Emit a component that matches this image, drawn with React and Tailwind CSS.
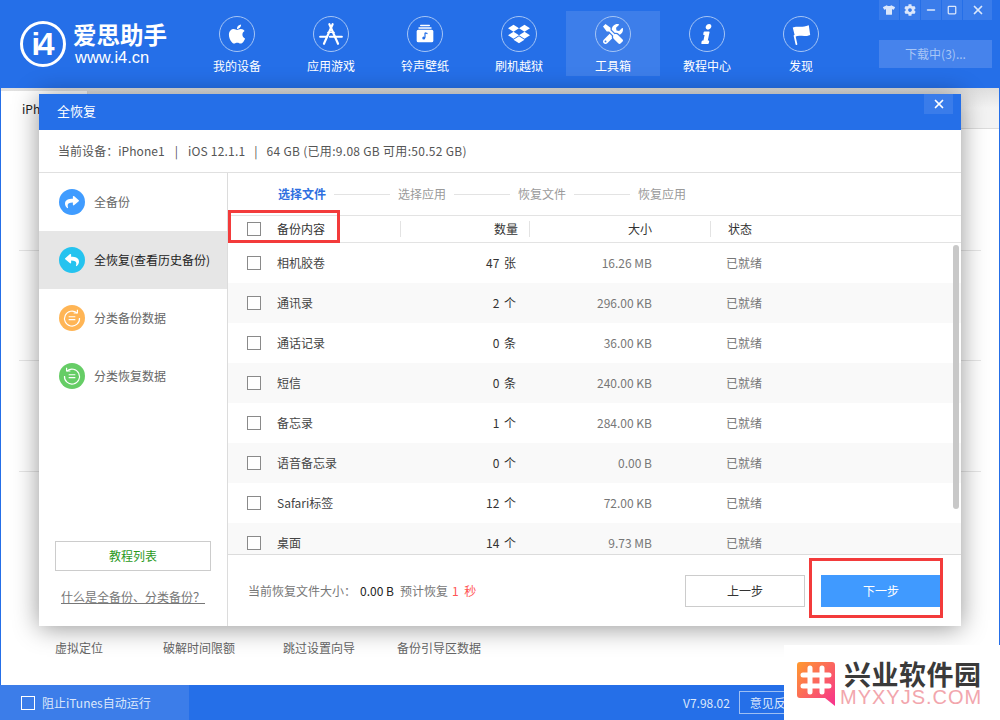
import { FaApple, FaDropbox, FaTshirt, FaCog, FaTools, FaInfo, FaShare, FaReply } from 'react-icons/fa'
import { X, Minus, Square } from 'lucide-react'

const font = { fontFamily: '"Noto Sans CJK SC", sans-serif' }

const navItems = [
  { label: '我的设备', icon: <FaApple className="w-[22px] h-[22px]" /> },
  { label: '应用游戏', icon: <AppStoreIcon /> },
  { label: '铃声壁纸', icon: <RingIcon /> },
  { label: '刷机越狱', icon: <FaDropbox className="w-[22px] h-[22px]" /> },
  { label: '工具箱', icon: <FaTools className="w-5 h-5" />, active: true },
  { label: '教程中心', icon: <FaInfo className="w-5 h-5 -skew-x-12" /> },
  { label: '发现', icon: <FlagIcon /> },
]

const rows = [
  ['相机胶卷', '47 张', '16.26 MB'],
  ['通讯录', '2 个', '296.00 KB'],
  ['通话记录', '0 条', '36.00 KB'],
  ['短信', '0 条', '240.00 KB'],
  ['备忘录', '1 个', '284.00 KB'],
  ['语音备忘录', '0 个', '0.00 B'],
  ['Safari标签', '12 个', '72.00 KB'],
  ['桌面', '14 个', '9.73 MB'],
]

const tools = [
  { label: '虚拟定位', color: 'bg-[#12a55a]' },
  { label: '破解时间限额', color: 'bg-[#3e6fc9]' },
  { label: '跳过设置向导', color: 'bg-[#2a86d8]' },
  { label: '备份引导区数据', color: 'bg-[#3565c8]' },
]

const menu = [
  { label: '全备份', color: 'bg-[#409cff]', icon: <FaShare className="w-[14px] h-[14px] text-white" /> },
  { label: '全恢复(查看历史备份)', color: 'bg-[#25c3ef]', icon: <FaReply className="w-[14px] h-[14px] text-white" />, active: true },
  { label: '分类备份数据', color: 'bg-[#ffb555]', icon: <CycleIcon /> },
  { label: '分类恢复数据', color: 'bg-[#66cd66]', icon: <CycleIcon flip /> },
]

function AppStoreIcon() {
  return (
    <svg viewBox="0 0 24 24" className="w-[26px] h-[26px]" fill="none" stroke="white" strokeLinecap="round">
      <path d="M10.5 3 L18.5 21" strokeWidth="2" />
      <path d="M13.5 3 L5.5 21" strokeWidth="2" />
      <path d="M2 14.5 H8 M11 14.5 H22" strokeWidth="2" />
      <path d="M9 10.5 H15" strokeWidth="1" />
    </svg>
  )
}

function RingIcon() {
  return (
    <svg viewBox="0 0 24 24" className="w-[20px] h-[20px]">
      <rect x="6" y="1" width="12" height="1.6" rx="0.8" fill="white" />
      <rect x="4" y="4" width="16" height="1.6" rx="0.8" fill="white" />
      <rect x="2" y="7" width="20" height="15" rx="2" fill="white" />
      <path d="M12 10.5 V16.5 M12 10.5 L15 11.5" stroke="#256fe8" strokeWidth="1.4" fill="none" />
      <circle cx="10.5" cy="16.8" r="1.8" fill="#256fe8" />
    </svg>
  )
}

function FlagIcon() {
  return (
    <svg viewBox="0 0 24 24" className="w-[22px] h-[22px]" fill="white">
      <path d="M3 5 C8 2.5 11 6 20.5 2.5 L22 13 C15 16 11 12.5 5.5 15 Z" />
      <path d="M5 14 L7 23" stroke="white" strokeWidth="2" strokeLinecap="round" />
    </svg>
  )
}

function CycleIcon({ flip }) {
  return (
    <svg viewBox="0 0 24 24" className={flip ? 'w-5 h-5 -scale-x-100' : 'w-5 h-5'} fill="none" stroke="white" strokeWidth="1.4">
      <path d="M18 6 A9 9 0 1 0 21 12" />
      <path d="M14 6 H18.5 V2" />
      <path d="M8 10.5 H16 M8 14 H16" />
    </svg>
  )
}

function Checkbox() {
  return <span className="block w-[14px] h-[14px] border border-[#8a8a8a] bg-white shrink-0" />
}

function Step({ label, active, line }) {
  return (
    <>
      <span className={active ? 'text-[#2f6fe0] font-bold' : 'text-[#9a9a9a]'}>{label}</span>
      {line && <span className="w-[56px] h-px bg-[#e3e3e3] mx-[8px]" />}
    </>
  )
}

export default function App() {
  return (
    <div style={font} className="relative w-[1000px] h-[720px] overflow-hidden flex flex-col bg-white text-xs">
      <header className="h-[88px] bg-[#256fe8] flex shrink-0 relative">
        <div className="w-[190px] pl-[20px] pt-[21px] flex gap-[7px] text-white">
          <div className="w-[46px] h-[46px] rounded-full border-[3px] border-white flex items-center justify-center font-bold text-[31px] tracking-[-3px] leading-none pr-[3px]" style={{ fontFamily: '"Liberation Sans", sans-serif' }}>
            i4
          </div>
          <div>
            <div className="text-[23.5px] leading-[27px] font-bold whitespace-nowrap">爱思助手</div>
            <div className="text-[16.5px] leading-[19px] ml-[2px]" style={{ fontFamily: '"Liberation Sans", sans-serif' }}>www.i4.cn</div>
          </div>
        </div>
        <nav className="flex pt-[11px] h-[76px]">
          {navItems.map((item) => (
            <div key={item.label} className={`w-[94px] h-[65px] flex flex-col items-center pt-[5px] text-white ${item.active ? 'bg-[#3d7eea]' : ''}`}>
              <div className="w-[36px] h-[36px] rounded-full border border-[#a5c5f5] flex items-center justify-center">{item.icon}</div>
              <div className="mt-[5px] leading-[17px] whitespace-nowrap">{item.label}</div>
            </div>
          ))}
        </nav>
        <div className="absolute left-[879px] top-0 w-[113px] flex flex-col">
          <div className="flex gap-px h-[20px] text-[#dbe7fb]">
            <span className="w-[20px] bg-[#3a7cea] flex items-center justify-center"><FaTshirt className="w-3 h-3" /></span>
            <span className="w-[20px] bg-[#3a7cea] flex items-center justify-center"><FaCog className="w-3 h-3" /></span>
            <span className="w-[20px] bg-[#3a7cea] flex items-center justify-center"><Minus className="w-3 h-3" strokeWidth={3} /></span>
            <span className="w-[20px] bg-[#3a7cea] flex items-center justify-center"><Square className="w-[10px] h-[10px]" strokeWidth={3} /></span>
            <span className="flex-1 bg-[#3a7cea] flex items-center justify-center"><X className="w-[14px] h-[14px]" strokeWidth={3} /></span>
          </div>
          <div className="mt-[20px] h-[28px] bg-[#4683ec] text-[#a9c6f6] flex items-center justify-center">下载中(3)...</div>
        </div>
      </header>

      <main className="flex-1 relative flex flex-col border-x border-[#256fe8]">
        <div className="h-[41px] shrink-0 bg-gradient-to-b from-[#dedede] via-[#f3f3f3] to-[#f3f3f3] border-b border-[#dcdcdc] flex">
          <div className="w-[87px] mt-[3px] -mb-px pl-[21px] pt-[9px] leading-[18px] text-[#222] bg-white border-r border-[#ddd]">iPhone1</div>
        </div>
        <div className="flex-1 flex flex-col pt-[121px] px-[18px]">
          <div className="h-px bg-[#e6e6e6]" />
          <div className="h-px bg-[#e6e6e6] mt-[109px]" />
          <div className="h-px bg-[#e6e6e6] mt-[110px]" />
        </div>
        <div className="flex pl-[18px] pb-[28px]">
          {tools.map((t) => (
            <div key={t.label} className="w-[120px] flex flex-col items-center text-[#666]">
              <div className={`w-[48px] h-[48px] rounded-full ${t.color}`} />
              <div className="mt-[13px] leading-[18px] whitespace-nowrap">{t.label}</div>
            </div>
          ))}
        </div>
      </main>

      <footer className="h-[35px] bg-[#256fe8] flex items-center shrink-0 text-white">
        <div className="w-[189px] h-full bg-[#3c7de9] flex items-center pl-[21px] gap-[7px]">
          <span className="w-[14px] h-[14px] border border-white" />
          <span className="text-[#dbe7fb]">阻止iTunes自动运行</span>
        </div>
        <span className="ml-[494px] text-[#dbe7fb]">V7.98.02</span>
        <span className="ml-[9px] w-[70px] h-[23px] border border-[#9dbff3] flex items-center justify-center text-[#dbe7fb]">意见反馈</span>
      </footer>

      {/* dialog */}
      <div className="absolute left-[39px] top-[94px] w-[922px] h-[532px] bg-white flex flex-col shadow-[0_2px_24px_rgba(0,0,0,0.42)]">
        <div className="h-[36px] bg-[#256fe8] text-white text-[13px] pl-[18px] pb-[2px] flex items-center relative shrink-0">
          全恢复
          <span className="absolute right-[8px] top-0 w-[29px] h-[20px] bg-[#3a7cea] flex items-center justify-center">
            <X className="w-[14px] h-[14px]" strokeWidth={3} />
          </span>
        </div>
        <div className="h-[43px] border-b border-[#e0e0e0] pl-[19px] flex items-center text-[#555] shrink-0 whitespace-pre">
          <span className="tracking-[0.05px]">当前设备：iPhone1</span>
          <span className="mx-[10px]">|</span>
          <span className="tracking-[0.2px]">iOS 12.1.1</span>
          <span className="mx-[9px]">|</span>
          <span className="tracking-[0.3px]">64 GB (已用:9.08 GB 可用:50.52 GB)</span>
        </div>
        <div className="flex-1 flex min-h-0">
          <aside className="w-[189px] border-r border-[#dcdcdc] flex flex-col shrink-0">
            {menu.map((m) => (
              <div key={m.label} className={`h-[58px] pl-[20px] flex items-center gap-[9px] whitespace-nowrap ${m.active ? 'bg-[#e6e6e6] text-[#222]' : 'text-[#666]'}`}>
                <span className={`w-[26px] h-[26px] rounded-full flex items-center justify-center ${m.color}`}>{m.icon}</span>
                {m.label}
              </div>
            ))}
            <div className="mt-auto mx-[16px] mb-[20px] flex flex-col items-center">
              <div className="w-[156px] h-[30px] border border-[#ccc] text-[#2b9a1c] flex items-center justify-center">教程列表</div>
              <div className="mt-[17px] leading-[18px] text-[#777] underline whitespace-nowrap">什么是全备份、分类备份？</div>
            </div>
          </aside>
          <section className="flex-1 flex flex-col min-w-0 relative">
            <div className="h-[43px] border-b border-[#e3e3e3] flex items-center pl-[50px] shrink-0">
              <Step label="选择文件" active line />
              <Step label="选择应用" line />
              <Step label="恢复文件" line />
              <Step label="恢复应用" />
            </div>
            <div className="h-[27px] border-b border-[#e3e3e3] flex items-center pl-[19px] text-[#333] shrink-0">
              <Checkbox />
              <span className="ml-[16px] w-[124px] border-r border-[#e3e3e3]">备份内容</span>
              <span className="w-[129px] pr-[11px] text-right border-r border-[#e3e3e3]">数量</span>
              <span className="w-[181px] pr-[58px] text-right border-r border-[#e3e3e3]">大小</span>
              <span className="pl-[17px]">状态</span>
            </div>
            <div className="flex-1 min-h-0 overflow-hidden relative">
              {rows.map((r, i) => (
                <div key={r[0]} className={`h-[40px] flex items-center pl-[19px] ${i % 2 ? 'bg-[#f9f9f9]' : 'bg-white'}`}>
                  <Checkbox />
                  <span className="ml-[16px] w-[123px] text-[#444]">{r[0]}</span>
                  <span className="w-[116px] text-right text-[#333] [word-spacing:2px]">{r[1]}</span>
                  <span className="w-[136px] text-right text-[#777]">{r[2]}</span>
                  <span className="pl-[74px] text-[#777]">已就绪</span>
                </div>
              ))}
              <div className="absolute right-[2px] top-[2px] w-[6px] h-[264px] rounded-full bg-[#c8c8c8]" />
            </div>
            <div className="h-[72px] border-t border-[#dcdcdc] flex items-center pl-[20px] shrink-0 whitespace-pre">
              <span className="text-[#777] w-[112px]">当前恢复文件大小：</span>
              <span className="text-[#222] w-[40px]">0.00 B</span>
              <span className="text-[#777] w-[52px]">预计恢复</span>
              <span className="text-[#f55] [word-spacing:2px] tracking-[0.5px]">1 秒</span>
              <span className="ml-auto w-[120px] h-[32px] border border-[#ccc] text-[#333] flex items-center justify-center">上一步</span>
              <span className="ml-[16px] mr-[20px] w-[120px] h-[32px] bg-[#409aff] text-white flex items-center justify-center">下一步</span>
            </div>
          </section>
        </div>
      </div>

      {/* red annotation boxes */}
      <div className="absolute left-[228px] top-[210px] w-[112px] h-[33px] border-[3px] border-[#f33b3b]" />
      <div className="absolute left-[809px] top-[558px] w-[134px] h-[60px] border-[3px] border-[#f33b3b]" />

      {/* watermark */}
      <div className="absolute left-[784px] top-[645px] w-[216px] h-[75px] bg-white">
        <svg viewBox="0 0 38 44" className="absolute left-[13px] top-[17px] w-[38px] h-[44px]">
          <defs>
            <linearGradient id="wm" x1="0" y1="0" x2="1" y2="1">
              <stop offset="0" stopColor="#ff9a2e" />
              <stop offset="1" stopColor="#f7308f" />
            </linearGradient>
          </defs>
          <path d="M3 0 H35 A3 3 0 0 1 38 3 V44 L28 36 H3 A3 3 0 0 1 0 33 V3 A3 3 0 0 1 3 0 Z" fill="url(#wm)" />
          <path d="M13 6 V30 M25 6 V30 M6 13 H32 M6 24 H32" stroke="white" strokeWidth="5" strokeLinecap="round" />
        </svg>
        <div className="absolute left-[60px] top-[13px] text-[27px] leading-[32px] font-bold text-[#3a3a3a] whitespace-nowrap tracking-[0.5px]">兴业软件园</div>
        <div className="absolute left-[56px] top-[41px] text-[20px] leading-[22px] text-[#f2a6ad] whitespace-nowrap tracking-[1px]" style={{ fontFamily: '"Liberation Sans", sans-serif' }}>MYXYJS.COM</div>
      </div>
    </div>
  )
}
